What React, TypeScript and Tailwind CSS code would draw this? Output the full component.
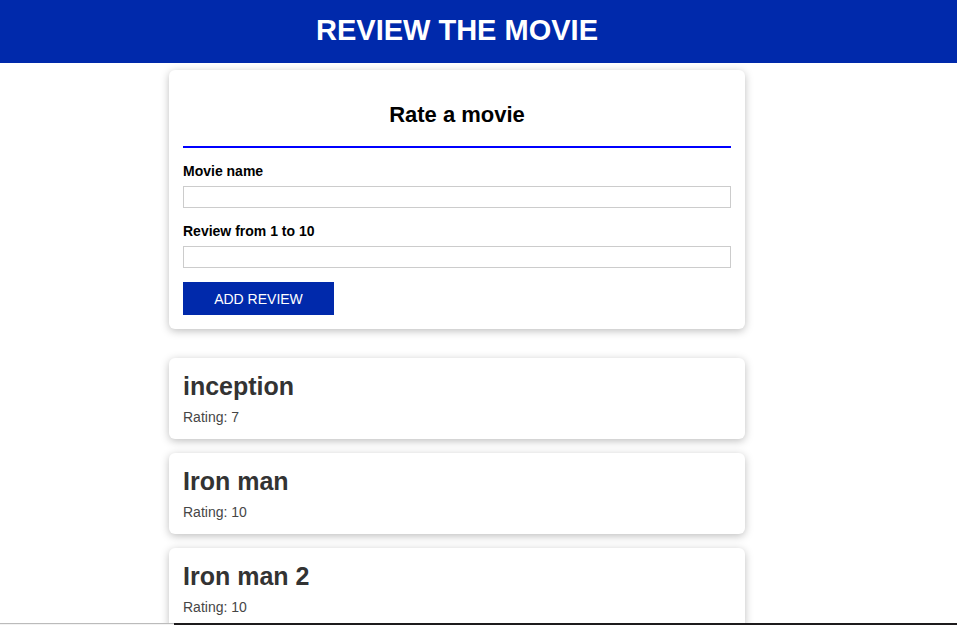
const reviews = [
  { title: "inception", rating: 7 },
  { title: "Iron man", rating: 10 },
  { title: "Iron man 2", rating: 10 },
];

const card = "rounded-md bg-white shadow-[0_2px_8px_rgba(0,0,0,0.26)]";

function Field({ id, label }: { id: string; label: string }) {
  return (
    <div className="mb-3.5">
      <label htmlFor={id} className="mb-1.5 block text-sm leading-[18px] font-bold">
        {label}
      </label>
      <input id={id} className="block h-[22px] w-full border border-[#cccccc] px-1 text-sm" />
    </div>
  );
}

export default function App() {
  return (
    <div className="flex h-screen flex-col bg-white font-['Liberation_Sans',Arial,sans-serif] text-black">
      <div className="min-h-0 flex-1 overflow-hidden">
        <header className="flex h-[63px] justify-center bg-[#0029ab] pt-3 pr-[43px]">
          <h1 className="text-[29px] leading-9 font-bold text-white">REVIEW THE MOVIE</h1>
        </header>
        <main className="pr-[43px]">
          <div className="mx-auto w-full max-w-[576px] pt-[7px]">
            <form className={`${card} mb-[29px] px-3.5 pt-7 pb-3.5`}>
              <h2 className="mb-3.5 border-b-2 border-[#0000ff] pt-1 pb-[18px] text-center text-[22px] leading-[26px] font-bold">
                Rate a movie
              </h2>
              <Field id="movie" label="Movie name" />
              <Field id="review" label="Review from 1 to 10" />
              <button type="button" className="block h-[33px] w-[151px] bg-[#0029ab] text-sm text-white">
                ADD REVIEW
              </button>
            </form>
            <ul className="flex flex-col gap-3.5">
              {reviews.map((review) => (
                <li key={review.title} className={`${card} p-3.5`}>
                  <h2 className="mb-2 text-[25px] leading-[29px] font-bold text-[#333333]">{review.title}</h2>
                  <p className="text-sm leading-4 text-[#464646]">Rating: {review.rating}</p>
                </li>
              ))}
            </ul>
          </div>
        </main>
      </div>
      <footer className="flex h-0.5 shrink-0">
        <div className="w-[174px] border-t border-[#bbbbbb] bg-[#f3f3f3]" />
        <div className="flex-1 bg-[#1d1b1c]" />
      </footer>
    </div>
  );
}
